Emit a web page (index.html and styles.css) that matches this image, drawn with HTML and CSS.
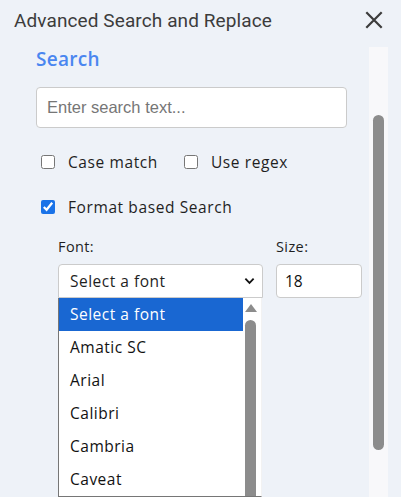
FILE: index.html
```html
<!DOCTYPE html>
<html lang="en">
<head>
  <meta charset="UTF-8" />
  <title>Advanced Search and Replace</title>
  <link rel="stylesheet" href="styles.css">
</head>
<body>
  <div class="panel">
    <div class="panel-header">
      <span class="panel-title">Advanced Search and Replace</span>
      <button class="close-btn" aria-label="Close">
        <svg viewBox="0 0 20 20"><path d="M3 3L17 17M17 3L3 17"/></svg>
      </button>
    </div>

    <div class="panel-body">
      <div class="panel-content">
        <h2 class="section-title">Search</h2>
        <input class="search-input" type="text" placeholder="Enter search text..." />

        <div class="check-row">
          <label class="check"><input type="checkbox" /> <span>Case match</span></label>
          <label class="check"><input type="checkbox" /> <span>Use regex</span></label>
        </div>
        <div class="check-row second">
          <label class="check"><input type="checkbox" checked /> <span>Format based Search</span></label>
        </div>

        <div class="format-fields">
          <div class="field field-font">
            <span class="field-label">Font:</span>
            <div class="select-wrap">
              <div class="select-box">
                <span>Select a font</span>
                <svg viewBox="0 0 12 8"><path d="M1.5 1.5L6 6L10.5 1.5"/></svg>
              </div>
              <div class="dropdown">
                <ul class="dropdown-list">
                  <li class="active">Select a font</li>
                  <li>Amatic SC</li>
                  <li>Arial</li>
                  <li>Calibri</li>
                  <li>Cambria</li>
                  <li>Caveat</li>
                </ul>
                <div class="dropdown-scroll">
                  <svg class="scroll-up" viewBox="0 0 12 8"><path d="M6 0L12 8H0z"/></svg>
                  <div class="dropdown-thumb"></div>
                </div>
              </div>
            </div>
          </div>
          <div class="field field-size">
            <span class="field-label">Size:</span>
            <input class="size-input" type="text" value="18" />
          </div>
        </div>
      </div>

      <div class="scroll-track">
        <div class="scroll-thumb"></div>
      </div>
    </div>
  </div>
</body>
</html>
```

FILE: styles.css
```css
html, body {
  margin: 0; padding: 0; height: 100%; overflow: hidden;
  background-color: #eef2f8;
  font-family: 'Open Sans', 'Liberation Sans', sans-serif;
  color: #1f1f1f;
}
.panel {
  display: flex;
  flex-direction: column;
  height: 100%;
}
.panel-header {
  display: flex;
  align-items: center;
  justify-content: space-between;
  height: 44px;
  padding: 0 16px 0 14px;
  flex-shrink: 0;
}
.panel-title {
  font-family: Roboto, 'Liberation Sans', sans-serif;
  font-size: 19px;
  letter-spacing: 0.1px;
  color: #3c3c3c;
  margin-top: -4px;
}
.close-btn {
  background: none;
  border: none;
  padding: 0;
  width: 22px;
  height: 22px;
  margin-top: -4px;
  cursor: pointer;
}
.close-btn svg {
  width: 22px;
  height: 22px;
  stroke: #3c3c3c;
  stroke-width: 2;
  fill: none;
}
.panel-body {
  display: flex;
  flex: 1;
  margin-top: 3px;
  min-height: 0;
}
.panel-content {
  flex: 1;
  min-width: 0;
  padding-left: 36px;
}
.section-title {
  margin: 0;
  font-size: 19px;
  line-height: 24px;
  font-weight: 600;
  color: #4a86f0;
  letter-spacing: 0.3px;
}
.search-input {
  display: block;
  box-sizing: border-box;
  width: 311px;
  height: 41px;
  margin-top: 16px;
  padding: 0 10px;
  border: 1px solid #cbcbcb;
  border-radius: 4px;
  background: #fff;
  font-family: 'Liberation Sans', Arial, sans-serif;
  font-size: 16.5px;
  outline: none;
}
.search-input::placeholder {
  color: #767676;
}
.check-row {
  display: flex;
  gap: 26px;
  margin-top: 24px;
  padding-left: 5px;
  line-height: 20px;
}
.check-row.second {
  margin-top: 25px;
}
.check {
  display: flex;
  align-items: center;
  gap: 13px;
  font-size: 15.5px;
  letter-spacing: 0.6px;
  color: #1f1f1f;
}
.check input {
  width: 14px;
  height: 14px;
  margin: 0;
  accent-color: #1a73e8;
}
.format-fields {
  display: flex;
  gap: 13px;
  margin-top: 20px;
  padding-left: 22px;
}
.field {
  display: flex;
  flex-direction: column;
  gap: 7px;
}
.field-font {
  width: 205px;
}
.field-label {
  font-size: 14.5px;
  line-height: 20px;
  letter-spacing: 0.4px;
}
.select-wrap {
  position: relative;
}
.select-box {
  box-sizing: border-box;
  height: 34px;
  display: flex;
  align-items: center;
  justify-content: space-between;
  padding: 0 7px 0 11px;
  background: #fff;
  border: 1px solid #cbcbcb;
  border-radius: 4px 4px 0 0;
  font-size: 15.5px;
  letter-spacing: 0.5px;
}
.select-box svg {
  width: 11px;
  height: 8px;
  fill: none;
  stroke: #111;
  stroke-width: 2;
}
.dropdown {
  position: absolute;
  top: 34px;
  left: 0;
  box-sizing: border-box;
  width: 204px;
  height: 199px;
  display: flex;
  background: #fff;
  border-left: 1px solid #767676;
  border-right: 1px solid #f2f2f2;
  border-bottom: 1px solid #767676;
  overflow: hidden;
}
.dropdown-list {
  list-style: none;
  margin: 0;
  padding: 0;
  flex: 1;
}
.dropdown-list li {
  height: 33px;
  line-height: 33px;
  padding-left: 11px;
  font-size: 15.5px;
  letter-spacing: 0.5px;
  color: #111;
}
.dropdown-list li.active {
  background: #1967d2;
  color: #fff;
}
.dropdown-scroll {
  width: 15px;
  display: flex;
  flex-direction: column;
  align-items: center;
  padding-top: 6px;
  gap: 8px;
  margin-right: 3px;
}
.scroll-up {
  width: 12px;
  height: 8px;
  fill: #8c8c8c;
}
.dropdown-thumb {
  width: 11px;
  flex: 1;
  border-radius: 6px 6px 0 0;
  background: #8c8c8c;
}
.field-size {
  width: 86px;
}
.size-input {
  box-sizing: border-box;
  width: 86px;
  height: 34px;
  padding: 0 8px;
  border: 1px solid #cbcbcb;
  border-radius: 4px;
  background: #fff;
  font-family: 'Open Sans', sans-serif;
  font-size: 15.5px;
  color: #111;
  outline: none;
}
.scroll-track {
  width: 19px;
  margin-right: 13px;
  background: #f8f8fa;
  display: flex;
  justify-content: center;
  flex-shrink: 0;
}
.scroll-thumb {
  width: 11px;
  height: 335px;
  margin-top: 68px;
  border-radius: 6px;
  background: #8c8c8c;
}
```
